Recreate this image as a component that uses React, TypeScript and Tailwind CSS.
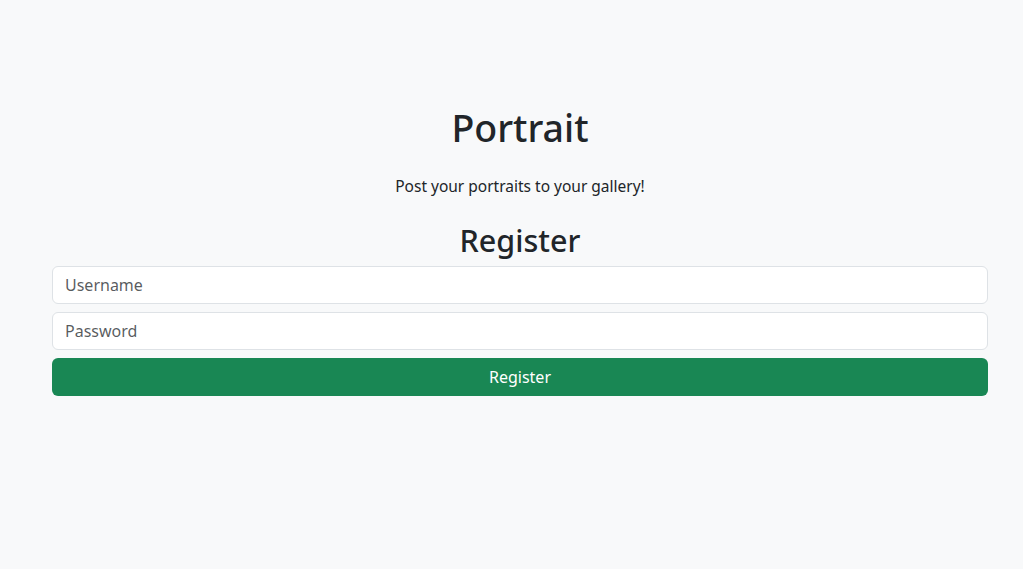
export default function App() {
  return (
    <div className="min-h-[569px] w-full bg-[#f8f9fa] font-['Noto_Sans',sans-serif] text-[#212529]">
      <div className="ml-[52px] flex w-[936px] flex-col pt-[104px]">
        <h1 className="text-center text-[37.5px] font-medium leading-[48px]">
          Portrait
        </h1>
        <p className="mt-[22px] text-center text-[15.5px] leading-6">
          Post your portraits to your gallery!
        </p>
        <h2 className="mt-[23px] text-center text-[30.5px] font-medium leading-[38px]">
          Register
        </h2>
        <form className="mt-[7px] flex flex-col gap-2">
          <input
            type="text"
            placeholder="Username"
            className="h-[38px] w-full rounded-md border border-[#dee2e6] bg-white px-3 text-base text-[#212529] placeholder:text-[#212529bf]"
          />
          <input
            type="password"
            placeholder="Password"
            className="h-[38px] w-full rounded-md border border-[#dee2e6] bg-white px-3 text-base text-[#212529] placeholder:text-[#212529bf]"
          />
          <button
            type="button"
            className="h-[38px] w-full rounded-md bg-[#198754] text-base text-white"
          >
            Register
          </button>
        </form>
      </div>
    </div>
  );
}
